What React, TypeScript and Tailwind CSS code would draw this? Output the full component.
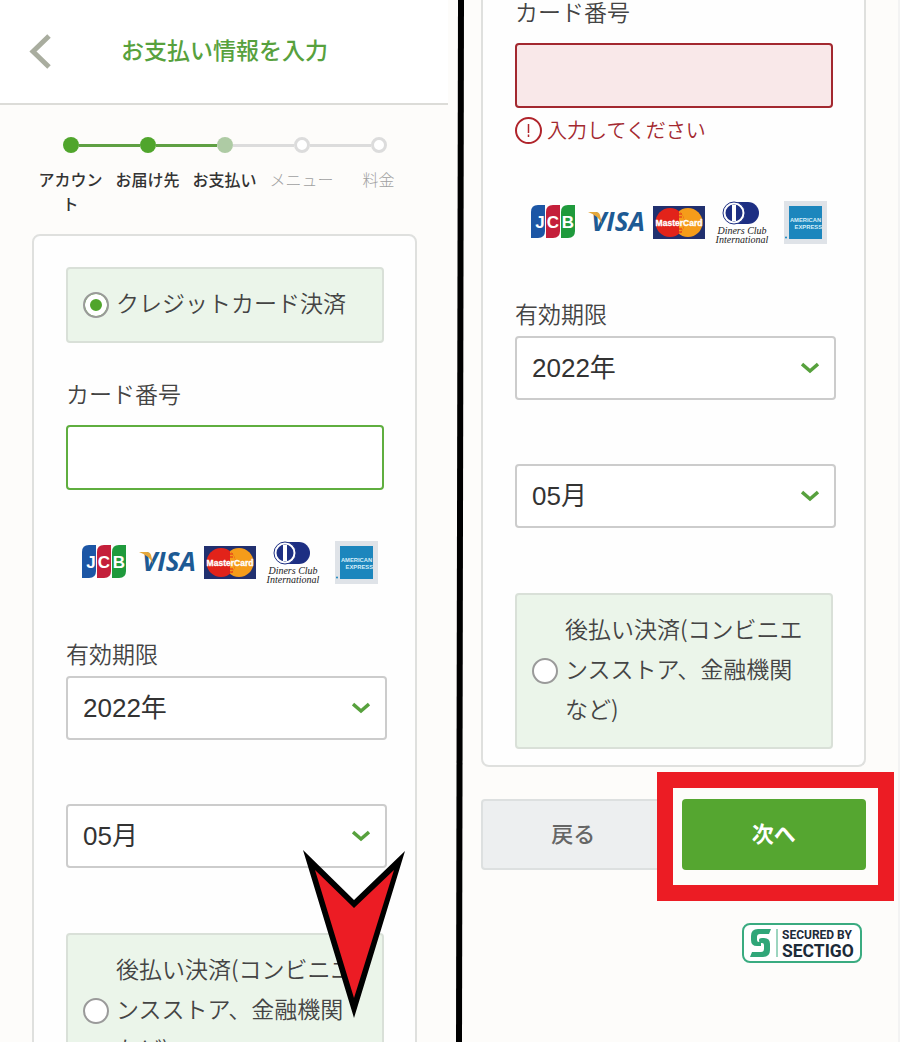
import React from 'react';

const steps = [
  { label: 'アカウント', state: 'done' },
  { label: 'お届け先', state: 'done' },
  { label: 'お支払い', state: 'current' },
  { label: 'メニュー', state: 'todo' },
  { label: '料金', state: 'todo' },
];

const dotStyles: Record<string, string> = {
  done: 'bg-[#50a52c]',
  current: 'bg-[#aecba4]',
  todo: 'bg-white border-[3px] border-[#dcdcdc]',
};

const StepBar = () => (
  <ol className="grid grid-cols-5">
    {steps.map((step, i) => {
      const before = i === 0 ? 'bg-transparent' : i <= 2 ? 'bg-[#5fa043]' : 'bg-[#dcdcdc]';
      const after = i === steps.length - 1 ? 'bg-transparent' : i < 2 ? 'bg-[#5fa043]' : 'bg-[#dcdcdc]';
      return (
        <li key={step.label}>
          <div className="flex items-center">
            <span className={`h-[3px] flex-1 ${before}`} />
            <span className={`size-4 rounded-full ${dotStyles[step.state]}`} />
            <span className={`h-[3px] flex-1 ${after}`} />
          </div>
          <p
            className={`mt-[14px] px-1 text-center text-base leading-6 break-all ${
              step.state === 'todo' ? 'font-light text-[#a0a0a0]' : 'font-medium text-[#333]'
            }`}
          >
            {step.label}
          </p>
        </li>
      );
    })}
  </ol>
);

const CardBrands = () => (
  <svg viewBox="0 0 296 44" className="ml-4 h-11 w-[296px]" role="img" aria-label="JCB VISA MasterCard Diners Club American Express">
    {/* JCB */}
    <g>
      <path d="M7 5h7v26q0 7-7 7H0V12q0-7 7-7z" fill="#1c56a5" />
      <path d="M22 5h7v26q0 7-7 7h-7V12q0-7 7-7z" fill="#c41f3a" />
      <path d="M37 5h7v26q0 7-7 7h-7V12q0-7 7-7z" fill="#1f9a3c" />
      <g textAnchor="middle" fill="#fff" fontSize="17" fontWeight="700" fontFamily="Liberation Sans, sans-serif">
        <text x="9" y="28">J</text>
        <text x="22" y="28">C</text>
        <text x="37" y="28">B</text>
      </g>
    </g>
    {/* VISA */}
    <g>
      <text x="60" y="31" fill="#1d5a94" fontSize="26" fontWeight="700" fontStyle="italic" fontFamily="Open Sans, sans-serif">
        VISA
      </text>
      <path d="M57 12h8q3 0 4 3l2 9q-3-8-14-12z" fill="#e5a73b" />
    </g>
    {/* MasterCard */}
    <g>
      <rect x="122" y="6" width="52" height="33" fill="#21306f" />
      <circle cx="157" cy="22.500" r="14.500" fill="#f59c1a" />
      <circle cx="139" cy="22.500" r="14.500" fill="#e2231a" />
      <path d="M148 11.100a14.500 14.500 0 0 1 0 22.800z" fill="#f59c1a" />
      <path d="M146 14h5M145 17h6M145 29h6M146 32h5" stroke="#e2231a" strokeWidth="1" />
      <text x="148" y="26" textAnchor="middle" fill="#fff" stroke="#fff" strokeWidth="0.300" fontSize="8.500" fontWeight="700" fontFamily="Liberation Sans, sans-serif">
        MasterCard
      </text>
    </g>
    {/* Diners Club */}
    <g>
      <path d="M203 2h14a11 11 0 0 1 0 22h-14z" fill="#1d2f83" />
      <circle cx="203" cy="13" r="11" fill="#fff" stroke="#1d2f83" strokeWidth="1" />
      <circle cx="203" cy="13" r="8.500" fill="#1d2f83" />
      <path d="M201 5h4v16h-4z" fill="#fff" />
      <text x="211" y="34" textAnchor="middle" fill="#222" fontSize="10" fontStyle="italic" fontFamily="Liberation Serif, serif">
        Diners Club
      </text>
      <text x="211" y="43" textAnchor="middle" fill="#222" fontSize="10" fontStyle="italic" fontFamily="Liberation Serif, serif">
        International
      </text>
    </g>
    {/* American Express */}
    <g>
      <rect x="253" y="1" width="43" height="43" fill="#dfe3e8" />
      <rect x="258" y="6" width="33" height="33" fill="#1c86bd" />
      <text x="274.500" y="22" textAnchor="middle" fill="#d6eefa" fontSize="5.800" fontWeight="700" fontFamily="Liberation Sans, sans-serif">
        AMERICAN
      </text>
      <text x="291" y="29" textAnchor="end" fill="#d6eefa" fontSize="5.800" fontWeight="700" fontFamily="Liberation Sans, sans-serif">
        EXPRESS
      </text>
      <circle cx="255" cy="37.500" r="1" fill="#1c86bd" />
    </g>
  </svg>
);

interface PaymentRadioProps {
  name: string;
  label: string;
  defaultChecked?: boolean;
}

const PaymentRadio: React.FC<PaymentRadioProps> = ({ name, label, defaultChecked }) => (
  <label className="mr-[3px] flex items-center gap-[7px] rounded-[4px] border-2 border-[#d9e0d8] bg-[#ebf5ea] py-4 pr-5 pl-[15px] text-[23px] leading-10 font-[350] text-[#444]">
    <input
      type="radio"
      name={name}
      defaultChecked={defaultChecked}
      className="size-[26px] shrink-0 appearance-none rounded-full border-2 border-[#9a9a9a] bg-white checked:bg-[#50a52c] checked:shadow-[inset_0_0_0_5px_#fff]"
    />
    <span className="-mt-[3px] mb-[3px]">{label}</span>
  </label>
);

interface SelectFieldProps {
  id: string;
  label: string;
  options: string[];
}

const SelectField: React.FC<SelectFieldProps> = ({ id, label, options }) => (
  <div className="relative">
    <select
      id={id}
      aria-label={label}
      className="h-16 w-full appearance-none rounded-[4px] border-2 border-[#ccc] bg-white px-[15px] font-['Liberation_Sans','Noto_Sans_CJK_JP',sans-serif] text-[26px] text-[#333]"
    >
      {options.map((option) => (
        <option key={option}>{option}</option>
      ))}
    </select>
    <svg viewBox="0 0 18 12" className="pointer-events-none absolute top-[26px] right-[17px] h-3 w-[18px]" fill="none">
      <path d="M1 2l8 7 8-7" stroke="#57a13d" strokeWidth="3.500" />
    </svg>
  </div>
);

interface CardFieldsProps {
  prefix: string;
  error?: string;
}

const CardFields: React.FC<CardFieldsProps> = ({ prefix, error }) => (
  <>
    <label htmlFor={`${prefix}-number`} className="block text-[23px] leading-9 font-[350] text-[#444]">
      カード番号
    </label>
    <div className="mt-[14px] mr-[3px]">
      <input
        id={`${prefix}-number`}
        type="text"
        inputMode="numeric"
        className={`block h-[65px] w-full rounded-[4px] border-2 px-4 text-[26px] outline-none ${
          error ? 'border-[#a3282f] bg-[#f9e8e9]' : 'border-[#5fae3f] bg-white'
        }`}
      />
    </div>
    {error && (
      <p className="mt-2 flex items-center gap-1 text-[20px] leading-7 font-[350] text-[#a3282f]">
        <svg viewBox="0 0 28 28" className="size-7" fill="none" stroke="#b0242b">
          <circle cx="13.500" cy="14.500" r="12.500" strokeWidth="2" />
          <path d="M13.500 8v9M13.500 18.500v2.500" strokeWidth="1.500" />
        </svg>
        {error}
      </p>
    )}
    <div className={error ? 'mt-14' : 'mt-[50px]'}>
      <CardBrands />
    </div>
    <fieldset className="mt-[50px]">
      <legend className="text-[23px] leading-[38px] font-[350] text-[#444]">有効期限</legend>
      <div className="mt-1 flex flex-col gap-16">
        <SelectField id={`${prefix}-year`} label="年" options={['2022年', '2023年', '2024年']} />
        <SelectField id={`${prefix}-month`} label="月" options={['05月', '06月', '07月']} />
      </div>
    </fieldset>
    <div className="mt-[65px]">
      <PaymentRadio name={`${prefix}-method`} label="後払い決済(コンビニエンスストア、金融機関など)" />
    </div>
  </>
);

const SectigoBadge = () => (
  <svg viewBox="0 0 120 40" className="h-10 w-[120px]" role="img" aria-label="Secured by Sectigo">
    <rect x="1" y="1" width="118" height="38" rx="7" fill="#fff" stroke="#3aab80" strokeWidth="2" />
    <path d="M29 6l-2 5H18q-3 0-3 3v3q0 2 2 2h2v4h-4q-6 0-6-6v-4q0-7 7-7z" fill="#2fa678" />
    <path d="M8 34l2-5h9q3 0 3-3v-4q0-2-2-2h-1q-2 0-2-3 0-2 3-2h2q6 0 6 6v6q0 7-7 7z" fill="#2fa678" />
    <path d="M35 6v28" stroke="#3aab80" strokeWidth="1" />
    <text x="40" y="16" fill="#1c2b39" fontSize="12" fontWeight="700" fontFamily="Roboto, sans-serif">
      SECURED BY
    </text>
    <text x="40" y="34" fill="#1c2b39" fontSize="17.500" fontWeight="700" fontFamily="Roboto, sans-serif">
      SECTIGO
    </text>
  </svg>
);

export default function App() {
  return (
    <main className="grid h-screen grid-cols-[456fr_8px_436fr] overflow-hidden bg-[#fdfcfa] font-['Noto_Sans_CJK_JP',sans-serif]">
      <section className="relative overflow-hidden">
        <header className="mr-2 flex h-[105px] items-center border-b-2 border-[#dcdcd8] bg-white pl-7">
          <button type="button" aria-label="戻る">
            <svg viewBox="0 0 24 36" className="h-9 w-6" fill="none">
              <path d="M21 2L5 17.500 21 33" stroke="#a9ad9f" strokeWidth="5" />
            </svg>
          </button>
          <h1 className="mb-1.5 ml-[69px] text-[23px] leading-10 font-medium text-[#57a13d]">お支払い情報を入力</h1>
        </header>

        <div className="pt-8 pr-[39px] pl-8">
          <StepBar />
          <div className="mt-[19px] rounded-lg border-2 border-[#dfe0de] bg-[#fefefe] pt-[31px] pr-7 pb-4 pl-8">
            <PaymentRadio name="entry-method" label="クレジットカード決済" defaultChecked />
            <div className="mt-8">
              <CardFields prefix="entry" />
            </div>
          </div>
        </div>

        {/* scroll hint */}
        <svg viewBox="0 0 102 168" className="absolute top-[850px] left-[303px] h-[168px] w-[102px]">
          <path d="M0 0l51 50 51-49-51 167z" fill="#000" />
          <path d="M12 20l39 38 40-38-40 128z" fill="#ec1c24" />
        </svg>
      </section>

      <div className="bg-black [clip-path:polygon(2px_0,100%_0,6px_100%,0_100%)]" />

      <section className="overflow-hidden border-r-2 border-[#f3f3f3] pr-8 pl-[17px]">
        <div className="rounded-b-lg border-2 border-t-0 border-[#dfe0de] bg-[#fefefe] pr-7 pb-4 pl-8">
          <div className="-mt-[7px]">
            <CardFields prefix="confirm" error="入力してください" />
          </div>
        </div>

        <div className="mt-8 grid grid-cols-2 gap-4">
          <button
            type="button"
            className="h-[71px] rounded-[4px] border-2 border-[#dde0e0] bg-[#edeff0] pb-1 text-[22px] font-medium text-[#666]"
          >
            戻る
          </button>
          <div className="relative">
            <button type="button" className="h-[71px] w-full rounded-[4px] bg-[#55a630] pb-1 text-[22px] font-bold text-white">
              次へ
            </button>
            <span className="pointer-events-none absolute -top-[27px] -right-7 -bottom-[31px] -left-[25px] border-[16px] border-[#ec1c24]" />
          </div>
        </div>

        <div className="mt-[53px] mr-1 flex justify-end">
          <SectigoBadge />
        </div>
      </section>
    </main>
  );
}
